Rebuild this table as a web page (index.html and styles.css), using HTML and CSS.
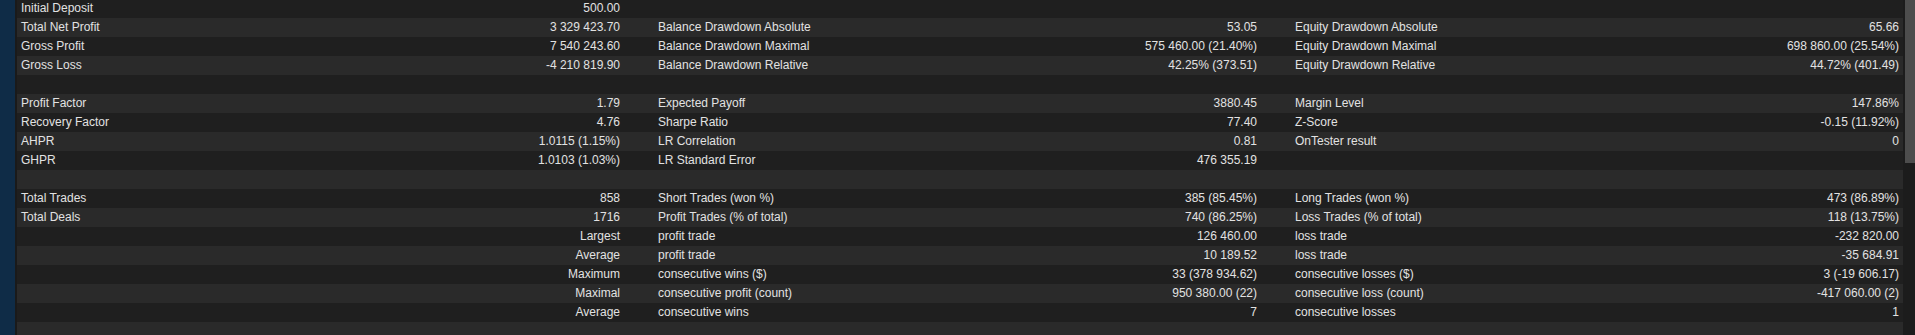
FILE: index.html
```html
<!DOCTYPE html>
<html lang="en">
<head>
    <meta charset="UTF-8">
    <title>Backtest</title>
    <link rel="stylesheet" href="styles.css">
</head>
<body>
    <div class="side"></div>
    <div class="report">
        <div class="row"><span class="lbl">Initial Deposit</span><span class="val">500.00</span><span class="lbl"></span><span class="val"></span><span class="lbl"></span><span class="val"></span></div>
        <div class="row"><span class="lbl">Total Net Profit</span><span class="val">3 329 423.70</span><span class="lbl">Balance Drawdown Absolute</span><span class="val">53.05</span><span class="lbl">Equity Drawdown Absolute</span><span class="val">65.66</span></div>
        <div class="row"><span class="lbl">Gross Profit</span><span class="val">7 540 243.60</span><span class="lbl">Balance Drawdown Maximal</span><span class="val">575 460.00 (21.40%)</span><span class="lbl">Equity Drawdown Maximal</span><span class="val">698 860.00 (25.54%)</span></div>
        <div class="row"><span class="lbl">Gross Loss</span><span class="val">-4 210 819.90</span><span class="lbl">Balance Drawdown Relative</span><span class="val">42.25% (373.51)</span><span class="lbl">Equity Drawdown Relative</span><span class="val">44.72% (401.49)</span></div>
        <div class="row"></div>
        <div class="row"><span class="lbl">Profit Factor</span><span class="val">1.79</span><span class="lbl">Expected Payoff</span><span class="val">3880.45</span><span class="lbl">Margin Level</span><span class="val">147.86%</span></div>
        <div class="row"><span class="lbl">Recovery Factor</span><span class="val">4.76</span><span class="lbl">Sharpe Ratio</span><span class="val">77.40</span><span class="lbl">Z-Score</span><span class="val">-0.15 (11.92%)</span></div>
        <div class="row"><span class="lbl">AHPR</span><span class="val">1.0115 (1.15%)</span><span class="lbl">LR Correlation</span><span class="val">0.81</span><span class="lbl">OnTester result</span><span class="val">0</span></div>
        <div class="row"><span class="lbl">GHPR</span><span class="val">1.0103 (1.03%)</span><span class="lbl">LR Standard Error</span><span class="val">476 355.19</span><span class="lbl"></span><span class="val"></span></div>
        <div class="row"></div>
        <div class="row"><span class="lbl">Total Trades</span><span class="val">858</span><span class="lbl">Short Trades (won %)</span><span class="val">385 (85.45%)</span><span class="lbl">Long Trades (won %)</span><span class="val">473 (86.89%)</span></div>
        <div class="row"><span class="lbl">Total Deals</span><span class="val">1716</span><span class="lbl">Profit Trades (% of total)</span><span class="val">740 (86.25%)</span><span class="lbl">Loss Trades (% of total)</span><span class="val">118 (13.75%)</span></div>
        <div class="row"><span class="lbl"></span><span class="val">Largest</span><span class="lbl">profit trade</span><span class="val">126 460.00</span><span class="lbl">loss trade</span><span class="val">-232 820.00</span></div>
        <div class="row"><span class="lbl"></span><span class="val">Average</span><span class="lbl">profit trade</span><span class="val">10 189.52</span><span class="lbl">loss trade</span><span class="val">-35 684.91</span></div>
        <div class="row"><span class="lbl"></span><span class="val">Maximum</span><span class="lbl">consecutive wins ($)</span><span class="val">33 (378 934.62)</span><span class="lbl">consecutive losses ($)</span><span class="val">3 (-19 606.17)</span></div>
        <div class="row"><span class="lbl"></span><span class="val">Maximal</span><span class="lbl">consecutive profit (count)</span><span class="val">950 380.00 (22)</span><span class="lbl">consecutive loss (count)</span><span class="val">-417 060.00 (2)</span></div>
        <div class="row"><span class="lbl"></span><span class="val">Average</span><span class="lbl">consecutive wins</span><span class="val">7</span><span class="lbl">consecutive losses</span><span class="val">1</span></div>
        <div class="row"></div>
    </div>
    <div class="scrollbar">
        <div class="thumb"></div>
    </div>
</body>
</html>
```

FILE: styles.css
```css
* {
    margin: 0;
    padding: 0;
    box-sizing: border-box;
}

body {
    display: flex;
    height: 100vh;
    overflow: hidden;
    background-color: #1f1f1f;
    color: #e2e2e2;
    font-family: 'Liberation Sans', Arial, sans-serif;
    font-size: 12px;
}

.side {
    width: 17px;
    flex-shrink: 0;
    background-color: #0f2c47;
    border-right: 2px solid #1a1a1a;
}

.report {
    flex: 1;
    margin-top: -1px;
}

.row {
    display: grid;
    grid-template-columns: 318px 319px 318px 319px 306px 1fr;
    height: 19px;
    line-height: 19px;
    background-color: #1f1f1f;
    white-space: nowrap;
}

.row:nth-child(even) {
    background-color: #2a2a2a;
}

.lbl {
    padding-left: 4px;
}

.val {
    text-align: right;
    padding-right: 34px;
}

.val:last-child {
    padding-right: 4px;
}

.scrollbar {
    width: 12px;
    flex-shrink: 0;
    background-color: #1c1c1c;
}

.thumb {
    height: 163px;
    border-left: 2px solid #1c1c1c;
    background-color: #4d4d4d;
}
```
